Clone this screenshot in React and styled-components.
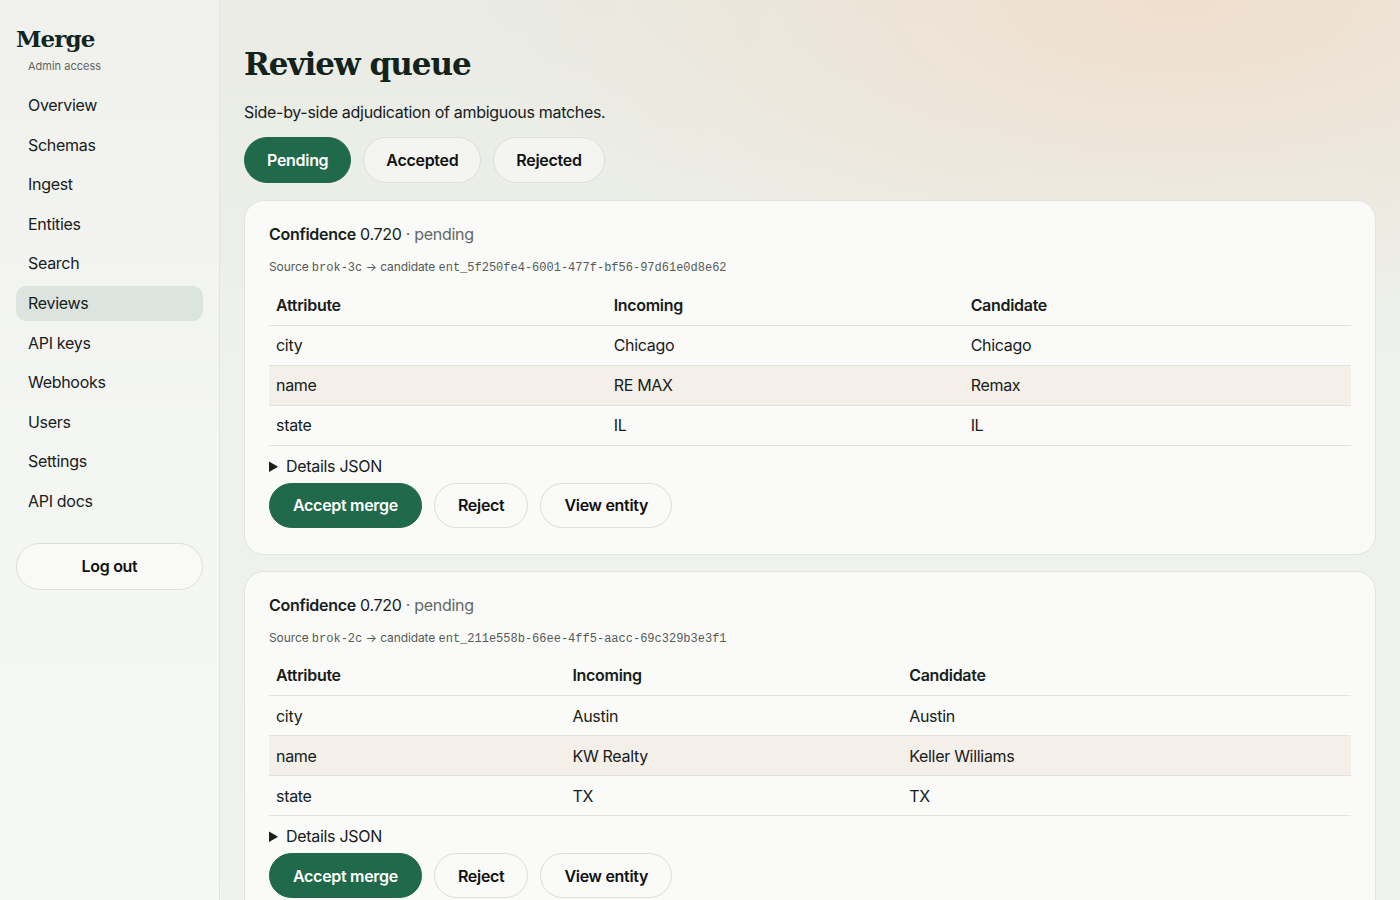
import styled, { createGlobalStyle } from "styled-components";

/* -------------------- GLOBAL -------------------- */

const GlobalStyle = createGlobalStyle`
  * { box-sizing: border-box; }
  html, body {
    margin: 0;
    padding: 0;
    height: 100%;
  }
  body {
    font-family: Inter, "Noto Sans", "Liberation Sans", sans-serif;
    letter-spacing: -0.3px;
    color: #16201b;
    background: #eef2ee;
  }
`;

/* -------------------- LAYOUT -------------------- */

const Shell = styled.div`
  display: grid;
  grid-template-columns: 220px 1fr;
  height: 900px;
  overflow: hidden;
  background:
    radial-gradient(ellipse 700px 320px at 1180px 0px, rgba(240, 222, 205, 0.95), rgba(240, 222, 205, 0) 100%),
    linear-gradient(180deg, #e9ebe4 0%, #eef1ec 40%, #eef3ef 100%);
`;

const Sidebar = styled.aside`
  border-right: 1px solid #e1e4df;
  background: linear-gradient(180deg, #f0f1ed 0%, #f4f6f3 50%, #f6f8f6 100%);
  padding: 22px 16px;
  display: flex;
  flex-direction: column;
`;

const Brand = styled.div`
  font-family: "DejaVu Serif", "Liberation Serif", serif;
  font-weight: 700;
  font-size: 23px;
  letter-spacing: -0.9px;
  color: #13251c;
  line-height: 33px;
`;

const BrandSub = styled.div`
  font-size: 11px;
  letter-spacing: 0;
  color: #5e6560;
  margin: 4px 0 0 12px;
`;

const Nav = styled.nav`
  display: flex;
  flex-direction: column;
  gap: 4.6px;
  margin-top: 15px;
`;

const NavItem = styled.a`
  display: block;
  padding: 0 12px;
  height: 35px;
  line-height: 35px;
  font-size: 16px;
  color: #18201c;
  border-radius: 10px;
  background: ${({ active }) => (active ? "#dbe4de" : "transparent")};
  cursor: pointer;
`;

const LogoutBtn = styled.button`
  margin-top: 24px;
  height: 47px;
  width: 100%;
  border-radius: 999px;
  border: 1px solid #dcdfdb;
  background: #f9faf8;
  font-family: inherit;
  letter-spacing: inherit;
  font-size: 16px;
  font-weight: 600;
  color: #111;
`;

const Main = styled.main`
  padding: 40px 24px 0 24px;
  display: flex;
  flex-direction: column;
`;

const Title = styled.h1`
  margin: 0;
  font-family: "DejaVu Serif", "Liberation Serif", serif;
  font-weight: 700;
  font-size: 31px;
  letter-spacing: -1px;
  line-height: 48px;
  color: #13231b;
`;

const Subtitle = styled.p`
  margin: 13px 0 0;
  font-size: 16px;
  line-height: 22px;
  color: #18201c;
`;

const Tabs = styled.div`
  display: flex;
  gap: 12px;
  margin-top: 14px;
`;

const Pill = styled.button`
  height: ${({ size }) => (size === "sm" ? 45 : 46)}px;
  padding: 0 ${({ size }) => (size === "sm" ? 23 : 22)}px;
  border-radius: 999px;
  font-family: inherit;
  letter-spacing: inherit;
  font-size: 16px;
  font-weight: 600;
  cursor: pointer;
  border: 1px solid ${({ primary }) => (primary ? "#20694a" : "#dcdedb")};
  background: ${({ primary }) => (primary ? "#20694a" : "rgba(250,250,248,0.6)")};
  color: ${({ primary }) => (primary ? "#ffffff" : "#111")};
`;

const Cards = styled.div`
  display: flex;
  flex-direction: column;
  gap: 16px;
  margin-top: 17px;
`;

const Card = styled.section`
  background: #fafaf8;
  border: 1px solid #e2e4e0;
  border-radius: 20px;
  padding: 22px 24px 26px;
`;

const CardHead = styled.div`
  font-size: 16px;
  line-height: 22px;
  color: #16201b;

  b { font-weight: 600; }
`;

const Muted = styled.span`
  color: #626864;
`;

const SourceLine = styled.div`
  margin-top: 14px;
  font-size: 12px;
  letter-spacing: -0.1px;
  color: #555b57;

  code {
    font-family: "Liberation Mono", "DejaVu Sans Mono", monospace;
    font-size: 12px;
    letter-spacing: 0;
    color: #555b57;
  }
`;

const Table = styled.table`
  width: 100%;
  border-collapse: collapse;
  margin-top: 10px;
  font-size: 16px;

  th {
    text-align: left;
    font-weight: 600;
    padding: 0 7px;
    height: 40px;
    border-bottom: 1px solid #e1e3df;
  }

  td {
    padding: 0 7px;
    height: 40px;
    border-bottom: 1px solid #e1e3df;
  }
`;

const Row = styled.tr`
  background: ${({ diff }) => (diff ? "#f5efea" : "transparent")};
`;

const Details = styled.details`
  margin-top: 11px;
  font-size: 16px;

  summary {
    cursor: pointer;
    line-height: 18px;
  }
`;

const Actions = styled.div`
  display: flex;
  gap: 12px;
  margin-top: 8px;
`;

/* -------------------- DATA -------------------- */

const navItems = [
  "Overview",
  "Schemas",
  "Ingest",
  "Entities",
  "Search",
  "Reviews",
  "API keys",
  "Webhooks",
  "Users",
  "Settings",
  "API docs",
];

const reviews = [
  {
    source: "brok-3c",
    candidate: "ent_5f250fe4-6001-477f-bf56-97d61e0d8e62",
    rows: [
      ["city", "Chicago", "Chicago"],
      ["name", "RE MAX", "Remax"],
      ["state", "IL", "IL"],
    ],
  },
  {
    source: "brok-2c",
    candidate: "ent_211e558b-66ee-4ff5-aacc-69c329b3e3f1",
    rows: [
      ["city", "Austin", "Austin"],
      ["name", "KW Realty", "Keller Williams"],
      ["state", "TX", "TX"],
    ],
  },
];

export default function App() {
  return (
    <>
      <GlobalStyle />
      <Shell>
        <Sidebar>
          <Brand>Merge</Brand>
          <BrandSub>Admin access</BrandSub>
          <Nav>
            {navItems.map((item) => (
              <NavItem key={item} active={item === "Reviews"}>
                {item}
              </NavItem>
            ))}
          </Nav>
          <LogoutBtn>Log out</LogoutBtn>
        </Sidebar>

        <Main>
          <Title>Review queue</Title>
          <Subtitle>Side-by-side adjudication of ambiguous matches.</Subtitle>

          <Tabs>
            <Pill primary>Pending</Pill>
            <Pill>Accepted</Pill>
            <Pill>Rejected</Pill>
          </Tabs>

          <Cards>
            {reviews.map((r) => (
              <Card key={r.source}>
                <CardHead>
                  <b>Confidence</b> 0.720 <Muted>· pending</Muted>
                </CardHead>
                <SourceLine>
                  Source <code>{r.source}</code> → candidate <code>{r.candidate}</code>
                </SourceLine>

                <Table>
                  <thead>
                    <tr>
                      <th>Attribute</th>
                      <th>Incoming</th>
                      <th>Candidate</th>
                    </tr>
                  </thead>
                  <tbody>
                    {r.rows.map(([attr, inc, cand]) => (
                      <Row key={attr} diff={inc !== cand}>
                        <td>{attr}</td>
                        <td>{inc}</td>
                        <td>{cand}</td>
                      </Row>
                    ))}
                  </tbody>
                </Table>

                <Details>
                  <summary>Details JSON</summary>
                </Details>

                <Actions>
                  <Pill primary size="sm">Accept merge</Pill>
                  <Pill size="sm">Reject</Pill>
                  <Pill size="sm">View entity</Pill>
                </Actions>
              </Card>
            ))}
          </Cards>
        </Main>
      </Shell>
    </>
  );
}
